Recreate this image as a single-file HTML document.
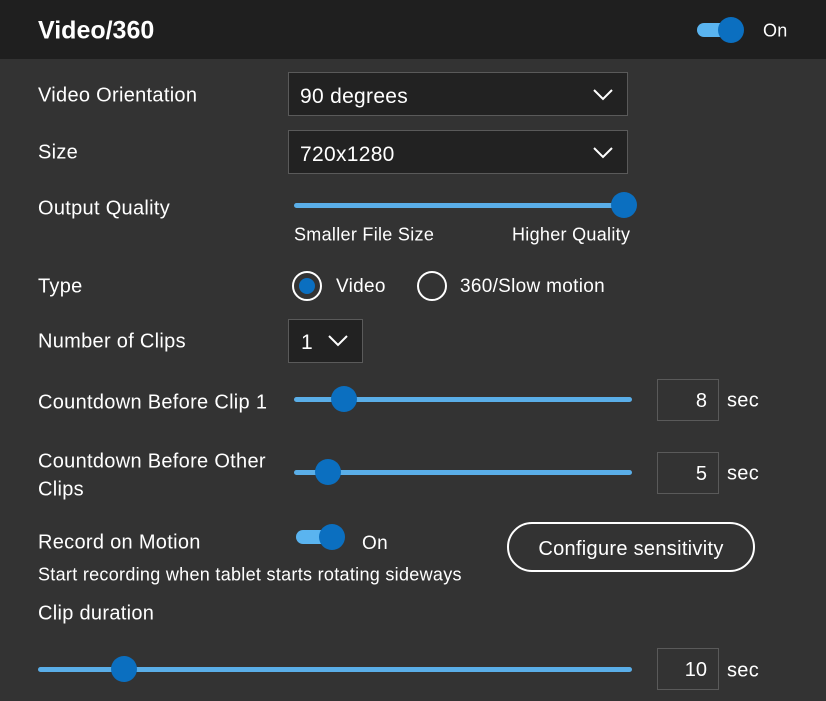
<!DOCTYPE html><html><head><style>
body{margin:0;width:826px;height:701px;background:#333;font-family:"Liberation Sans",sans-serif;color:#fff;position:relative;overflow:hidden}
.a{position:absolute;white-space:nowrap;font-size:20px;letter-spacing:0.3px;transform:translateY(-50%)}
.hd{position:absolute;left:0;top:0;width:826px;height:59px;background:#1f1f1f}
.dd{position:absolute;background:#222;border:1px solid #5a5a5a;box-sizing:border-box}
.tr{position:absolute;height:5px;background:#5aaee8;border-radius:3px}
.th{position:absolute;width:26px;height:26px;border-radius:50%;background:#0b6fc0}
.bx{position:absolute;width:62px;height:42px;border:1px solid #5a5a5a;box-sizing:border-box;text-align:right;padding-right:11px;line-height:42px;font-size:20px}
.tg{position:absolute;width:36px;height:14px;border-radius:7px;background:#5ab4f0}
</style></head><body>
<div class="hd"></div>
<div class="a" style="left:38px;top:31px;font-size:25px;font-weight:bold;letter-spacing:0px">Video/360</div>
<div class="tg" style="left:697px;top:23px"></div><div class="th" style="left:718px;top:17px"></div>
<div class="a" style="left:763px;top:31px;font-size:18px">On</div>

<div class="a" style="left:38px;top:96px">Video Orientation</div>
<div class="dd" style="left:288px;top:72px;width:340px;height:44px"></div>
<div class="a" style="left:300px;top:97px;font-size:21px">90 degrees</div>
<svg style="position:absolute;left:592px;top:88px" width="22" height="14"><path d="M2 2 L11 11 L20 2" stroke="#fff" stroke-width="2" fill="none"/></svg>

<div class="a" style="left:38px;top:153px">Size</div>
<div class="dd" style="left:288px;top:130px;width:340px;height:44px"></div>
<div class="a" style="left:300px;top:155px;font-size:21px">720x1280</div>
<svg style="position:absolute;left:592px;top:146px" width="22" height="14"><path d="M2 2 L11 11 L20 2" stroke="#fff" stroke-width="2" fill="none"/></svg>

<div class="a" style="left:38px;top:209px">Output Quality</div>
<div class="tr" style="left:294px;top:203px;width:330px"></div><div class="th" style="left:611px;top:192px"></div>
<div class="a" style="left:294px;top:235px;font-size:18px">Smaller File Size</div>
<div class="a" style="left:512px;top:235px;font-size:18px">Higher Quality</div>

<div class="a" style="left:38px;top:287px">Type</div>
<div style="position:absolute;left:292px;top:271px;width:26px;height:26px;border:2px solid #fff;border-radius:50%"></div>
<div style="position:absolute;left:299px;top:278px;width:16px;height:16px;background:#0b6fc0;border-radius:50%"></div>
<div class="a" style="left:336px;top:287px;font-size:19px">Video</div>
<div style="position:absolute;left:417px;top:271px;width:26px;height:26px;border:2px solid #fff;border-radius:50%"></div>
<div class="a" style="left:460px;top:287px;font-size:19px">360/Slow motion</div>

<div class="a" style="left:38px;top:342px">Number of Clips</div>
<div class="dd" style="left:288px;top:319px;width:75px;height:44px"></div>
<div class="a" style="left:301px;top:343px;font-size:21px">1</div>
<svg style="position:absolute;left:327px;top:334px" width="22" height="14"><path d="M2 2 L11 11 L20 2" stroke="#fff" stroke-width="2" fill="none"/></svg>

<div class="a" style="left:38px;top:403px">Countdown Before Clip 1</div>
<div class="tr" style="left:294px;top:397px;width:338px"></div><div class="th" style="left:331px;top:386px"></div>
<div class="bx" style="left:657px;top:379px">8</div>
<div class="a" style="left:727px;top:401px">sec</div>

<div class="a" style="left:38px;top:462px">Countdown Before Other</div>
<div class="a" style="left:38px;top:490px">Clips</div>
<div class="tr" style="left:294px;top:470px;width:338px"></div><div class="th" style="left:315px;top:459px"></div>
<div class="bx" style="left:657px;top:452px">5</div>
<div class="a" style="left:727px;top:474px">sec</div>

<div class="a" style="left:38px;top:543px">Record on Motion</div>
<div class="tg" style="left:296px;top:530px"></div><div class="th" style="left:319px;top:524px"></div>
<div class="a" style="left:362px;top:544px;font-size:19px">On</div>
<div class="a" style="left:38px;top:575px;font-size:18px">Start recording when tablet starts rotating sideways</div>
<div style="position:absolute;left:507px;top:522px;width:248px;height:50px;border:2px solid #fff;border-radius:25px;box-sizing:border-box;text-align:center;line-height:50px;font-size:20px;letter-spacing:0.3px">Configure sensitivity</div>

<div class="a" style="left:38px;top:614px">Clip duration</div>
<div class="tr" style="left:38px;top:667px;width:594px"></div><div class="th" style="left:111px;top:656px"></div>
<div class="bx" style="left:657px;top:648px">10</div>
<div class="a" style="left:727px;top:671px">sec</div>
</body></html>
